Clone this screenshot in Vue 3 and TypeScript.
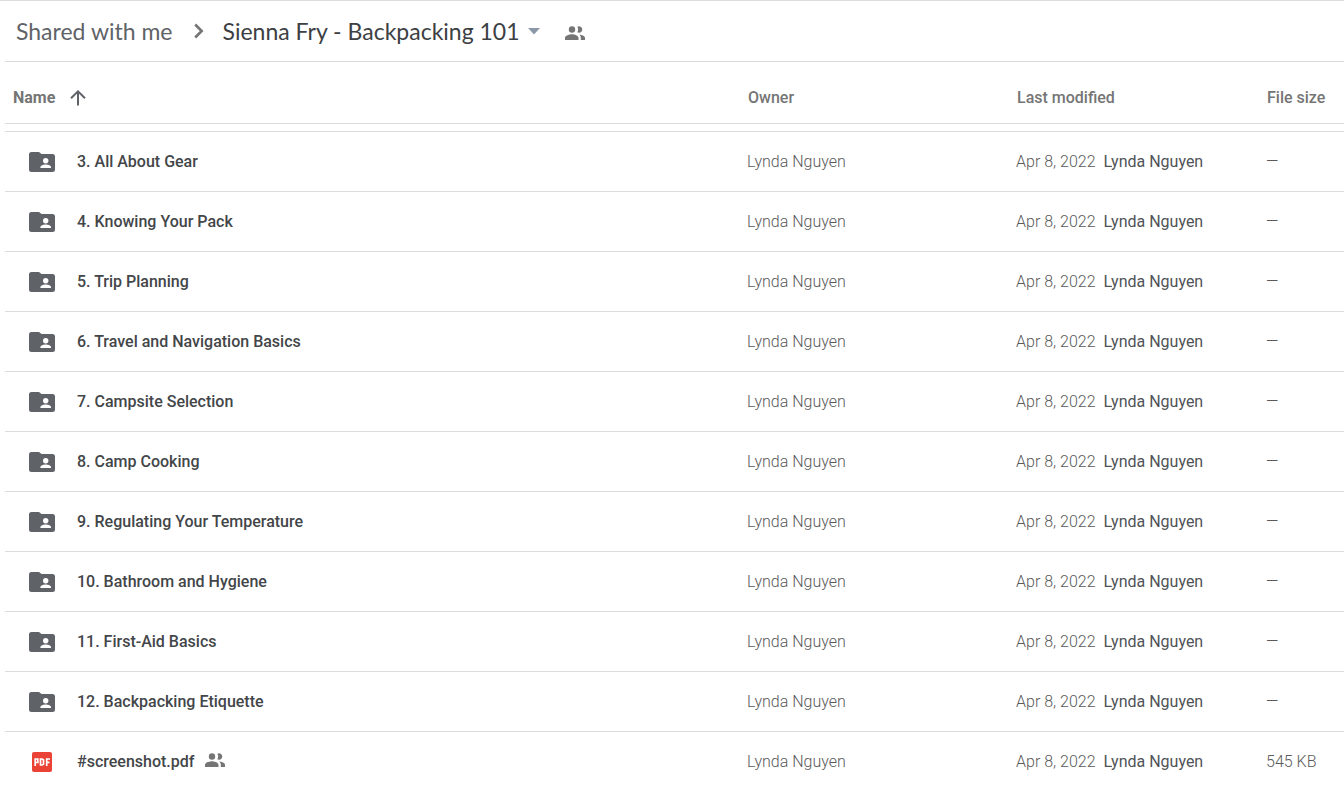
<script setup lang="ts">
interface DriveItem {
  name: string
  kind: 'folder' | 'pdf'
  owner: string
  modified: string
  modifiedBy: string
  size: string
  shared: boolean
}

const folderNames: string[] = [
  '3. All About Gear',
  '4. Knowing Your Pack',
  '5. Trip Planning',
  '6. Travel and Navigation Basics',
  '7. Campsite Selection',
  '8. Camp Cooking',
  '9. Regulating Your Temperature',
  '10. Bathroom and Hygiene',
  '11. First-Aid Basics',
  '12. Backpacking Etiquette',
]

const common = { owner: 'Lynda Nguyen', modified: 'Apr 8, 2022', modifiedBy: 'Lynda Nguyen' }

const items: DriveItem[] = [
  ...folderNames.map((name): DriveItem => ({ ...common, name, kind: 'folder', size: '—', shared: false })),
  { ...common, name: '#screenshot.pdf', kind: 'pdf', size: '545 KB', shared: true },
]

const peoplePath =
  'M9 11.7a3.2 3.2 0 1 0 0-6.4 3.2 3.2 0 0 0 0 6.400zM16 11.700a3.200 3.200 0 1 0-1.700-5.900 5 5 0 0 1 0 5.400c.500.300 1.100.500 1.700.500zM9 13.300c-2.400 0-7 1.200-7 3.500V19h13.500v-2.200c0-2.300-4.100-3.500-6.500-3.500zM16.300 13.400c.9.800 1.500 1.900 1.500 3.400V19H22v-2.200c0-2-3.400-3.100-5.700-3.400z'
</script>

<template>
  <main class="drive">
    <nav class="crumbs" aria-label="Breadcrumb">
      <a class="crumb" href="#">Shared with me</a>
      <svg class="chevron" viewBox="0 0 10 16" aria-hidden="true">
        <path d="M1.2 1.5 L7.7 8 L1.2 14.5" fill="none" stroke="#757575" stroke-width="2.6" />
      </svg>
      <button class="current" type="button">
        <span>Sienna Fry - Backpacking 101</span>
        <svg class="caret" viewBox="0 0 12 7" aria-hidden="true">
          <path d="M0 0H12L6 6.5Z" fill="#8b98a7" />
        </svg>
      </button>
      <button class="share" type="button" aria-label="Shared with people">
        <svg viewBox="2 5 20 14" class="people" aria-hidden="true">
          <path :d="peoplePath" />
        </svg>
      </button>
    </nav>

    <table class="files">
      <colgroup>
        <col />
        <col class="col-owner" />
        <col class="col-modified" />
        <col class="col-size" />
      </colgroup>
      <thead>
        <tr>
          <th scope="col" class="name-head" aria-sort="ascending">
            <button class="sort" type="button">
              Name
              <svg class="arrow" viewBox="0 0 16 16" aria-hidden="true">
                <path d="M8 15.5V1.5M1 8.3L8 1.4L15 8.3" fill="none" stroke="#5f6368" stroke-width="2" />
              </svg>
            </button>
          </th>
          <th scope="col">Owner</th>
          <th scope="col">Last modified</th>
          <th scope="col">File size</th>
        </tr>
      </thead>
      <tbody>
        <tr v-for="item in items" :key="item.name">
          <td class="name-cell">
            <div class="name">
              <span class="icon">
                <svg v-if="item.kind === 'folder'" class="folder" viewBox="0 0 26 20" aria-hidden="true">
                  <path d="M2.5 0H10L12.5 2H23.5A2.5 2.5 0 0 1 26 4.5V17.5A2.5 2.5 0 0 1 23.5 20H2.5A2.5 2.5 0 0 1 0 17.5V2.5A2.5 2.5 0 0 1 2.5 0Z" fill="#5f6368" />
                  <circle cx="16.7" cy="8.8" r="2.7" fill="#fff" />
                  <path d="M11.400 16V15C11.400 13.200 14.700 12.400 16.700 12.400S22 13.200 22 15V16Z" fill="#fff" />
                </svg>
                <svg v-else class="pdf" viewBox="0 0 20 20" role="img" aria-label="PDF">
                  <rect width="20" height="20" rx="2" fill="#ea4335" />
                  <path d="M3.2 14V7H5.8V10.5H3.2M8.5 7V13H10.200L11.500 12V8L10.200 7ZM14.700 14V7H18M14.700 10.300H17.500" fill="none" stroke="#fff" stroke-width="1.7" />
                </svg>
              </span>
              <span>{{ item.name }}</span>
              <svg v-if="item.shared" viewBox="2 5 20 14" class="people" role="img" aria-label="Shared">
                <path :d="peoplePath" />
              </svg>
            </div>
          </td>
          <td>{{ item.owner }}</td>
          <td>{{ item.modified }}<span class="by">{{ item.modifiedBy }}</span></td>
          <td>{{ item.size }}</td>
        </tr>
      </tbody>
    </table>
  </main>
</template>

<style>
body {
  margin: 0;
  background: #fff;
}
</style>

<style scoped>
.drive {
  box-sizing: border-box;
  height: 100vh;
  overflow: hidden;
  padding-left: 5px;
  border-top: 1px solid #dadce0;
  font-family: Roboto, "Liberation Sans", sans-serif;
  font-size: 16px;
  color: #757575;
}
button {
  display: flex;
  align-items: center;
  padding: 0;
  border: 0;
  background: none;
  font: inherit;
  color: inherit;
  cursor: pointer;
}
svg {
  display: block;
  flex: none;
}
.crumbs {
  display: flex;
  align-items: center;
  height: 60px;
  padding-left: 11px;
  border-bottom: 1px solid #dadce0;
  font-family: Lato, "Open Sans", sans-serif;
  font-size: 23px;
  line-height: 32px;
}
.crumb {
  color: #5f6368;
  text-decoration: none;
}
.chevron {
  width: 10px;
  height: 16px;
  margin: 0 19px 0 21px;
}
.current {
  gap: 8px;
  color: #3c4043;
}
.caret {
  width: 12px;
  height: 7px;
}
.share {
  margin: 4px 0 0 25px;
}
.people {
  width: 20px;
  height: 14px;
  fill: #757575;
}
.files {
  width: 100%;
  table-layout: fixed;
  border-collapse: separate;
  border-spacing: 0;
}
.col-owner {
  width: 269px;
}
.col-modified {
  width: 250px;
}
.col-size {
  width: 78px;
}
th,
td {
  box-sizing: border-box;
  padding: 0;
  text-align: left;
  white-space: nowrap;
}
th {
  height: 62px;
  padding: 10px 0 0 1px;
  border-bottom: 1px solid #dadce0;
  font-weight: 500;
}
.name-head {
  padding-left: 8px;
  font-weight: 700;
}
.sort {
  gap: 15px;
}
.arrow {
  width: 16px;
  height: 16px;
}
tbody::before {
  content: "";
  display: table-row;
  height: 7px;
}
td {
  height: 60px;
  border-top: 1px solid #dadce0;
  font-weight: 300;
  color: #5a5a5a;
}
.name {
  display: flex;
  align-items: center;
  font-weight: 500;
  color: #434649;
}
.icon {
  display: flex;
  justify-content: center;
  width: 26px;
  margin: 0 22px 0 24px;
}
.folder {
  width: 26px;
  height: 20px;
}
.pdf {
  width: 20px;
  height: 20px;
}
.name .people {
  margin: 0 0 4px 11px;
}
.by {
  margin-left: 8px;
  font-weight: 400;
  color: #505357;
}
</style>
